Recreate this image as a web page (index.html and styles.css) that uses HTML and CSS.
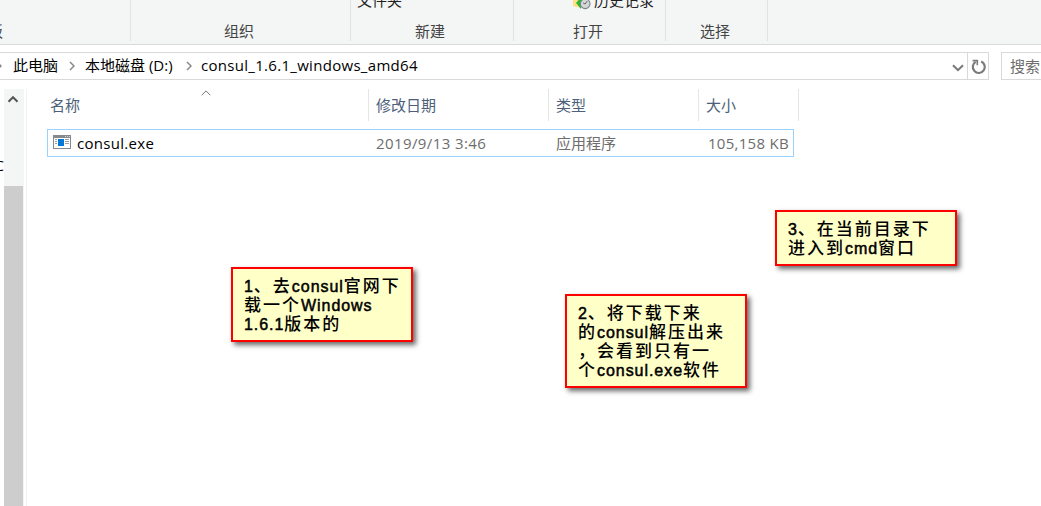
FILE: index.html
```html
<!DOCTYPE html>
<html lang="zh-CN">
<head>
<meta charset="utf-8">
<title>consul_1.6.1_windows_amd64</title>
<link rel="stylesheet" href="styles.css">
</head>
<body>
<div class="explorer">
  <header class="ribbon">
    <section class="group g-clip"><span class="label">板</span></section>
    <section class="group g-org"><span class="label">组织</span></section>
    <section class="group g-new"><span class="command">文件夹</span><span class="label">新建</span></section>
    <section class="group g-open">
      <span class="command">
        <svg class="history-icon" width="18" height="18" viewBox="0 0 18 18">
          <path d="M0 1h8v15l-8-2z" fill="#ffe08a"/>
          <path d="M3 11l6-7v3h3v7H8v3z" fill="#2fb534"/>
          <circle cx="12.200" cy="11.800" r="4.800" fill="#d5d8d8" stroke="#7d8585" stroke-width="1.1"/>
          <path d="M14.300 9l-2.200 3-2-1" fill="none" stroke="#606a6a"/>
        </svg>历史记录</span>
      <span class="label">打开</span>
    </section>
    <section class="group g-select"><span class="label">选择</span></section>
  </header>

  <nav class="address-row">
    <div class="address">
      <svg class="crumb-arrow first" width="6" height="10" viewBox="0 0 6 10"><path d="M1 1l4 4-4 4"/></svg>
      <span class="crumb pc">此电脑</span>
      <svg class="crumb-arrow" width="6" height="10" viewBox="0 0 6 10"><path d="M1 1l4 4-4 4"/></svg>
      <span class="crumb disk">本地磁盘 (D:)</span>
      <svg class="crumb-arrow" width="6" height="10" viewBox="0 0 6 10"><path d="M1 1l4 4-4 4"/></svg>
      <span class="crumb folder">consul_1.6.1_windows_amd64</span>
      <svg class="dropdown" width="12" height="8" viewBox="0 0 12 8"><path d="M1 1.2l5 5 5-5"/></svg>
      <span class="refresh">
        <svg width="16" height="16" viewBox="0 0 16 16"><path d="M10.200 2.500A6 6 0 1 1 4.600 2.900" fill="none" stroke="#7a7a7a" stroke-width="2.200"/><path d="M1.600 1.600h4.700v4.700" fill="none" stroke="#7a7a7a" stroke-width="1.600"/></svg>
      </span>
    </div>
    <div class="search">搜索</div>
  </nav>

  <main class="body">
    <aside class="tree">
      <span class="tree-clip">C</span>
      <div class="scrollbar">
        <svg width="12" height="8" viewBox="0 0 12 8"><path d="M1.500 6.700L6 2.200l4.500 4.500" fill="none" stroke="#555" stroke-width="2"/></svg>
        <div class="thumb"></div>
      </div>
    </aside>
    <section class="files">
      <div class="columns">
        <div class="col c-name">名称
          <svg class="sort" width="10" height="6" viewBox="0 0 10 6"><path d="M.7 5.200L5 .9l4.300 4.300" fill="none" stroke="#777"/></svg>
        </div>
        <div class="col c-date">修改日期</div>
        <div class="col c-type">类型</div>
        <div class="col c-size">大小</div>
      </div>
      <div class="file">
        <svg class="exe" width="18" height="14" viewBox="0 0 18 14" shape-rendering="crispEdges">
          <rect width="18" height="14" fill="#85888c"/>
          <rect x="1" y="3" width="16" height="10" fill="#fff"/>
          <path d="M12 1h1v1h-1zM14 1h1v1h-1zM16 1h1v1h-1z" fill="#d7d9db"/>
          <path d="M2 4h2v1H2zM2 6h2v1H2zM2 8h2v1H2zM12 4h4v1h-4zM12 6h4v1h-4zM12 8h4v1h-4z" fill="#999ca0"/>
          <rect x="5" y="4" width="6" height="7" fill="#0078d7"/>
        </svg>
        <span class="f-name">consul.exe</span>
        <span class="f-date">2019/9/13 3:46</span>
        <span class="f-type">应用程序</span>
        <span class="f-size">105,158 KB</span>
      </div>
    </section>
  </main>

  <div class="note note-1">
    <p><b>1</b>、去<b>consul</b>官网下</p>
    <p>载一个<b>Windows</b></p>
    <p><b>1.6.1</b>版本的</p>
  </div>
  <div class="note note-2">
    <p><b>2</b>、将下载下来</p>
    <p>的<b>consul</b>解压出来</p>
    <p>，会看到只有一</p>
    <p>个<b>consul.exe</b>软件</p>
  </div>
  <div class="note note-3">
    <p><b>3</b>、在当前目录下</p>
    <p>进入到<b>cmd</b>窗口</p>
  </div>
</div>
</body>
</html>
```
FILE: styles.css
```css
* { box-sizing: border-box; }
body { margin: 0; background: #fff; }
.explorer {
  position: relative;
  width: 1041px;
  height: 506px;
  overflow: hidden;
  font: 15px/20px "Open Sans", "Noto Sans CJK SC", sans-serif;
  color: #000;
  white-space: nowrap;
}
svg { display: block; flex: none; }

.ribbon {
  display: flex;
  height: 45px;
  background: #f4f6f6;
  border-bottom: 1px solid #d9dada;
  color: #444;
}
.group {
  display: flex;
  flex-direction: column;
  justify-content: flex-end;
  height: 41px;
  border-right: 1px solid #e1e3e3;
}
.group .command { display: flex; align-items: flex-end; height: 20px; margin-bottom: 11px; color: #222; }
.label { height: 20px; }
.g-clip { width: 131px; }
.g-clip .label { margin-left: -12px; }
.g-org { width: 220px; padding-left: 93px; }
.g-new { width: 163px; padding-left: 6px; }
.g-new .label { padding-left: 58px; }
.g-open { width: 152px; padding-left: 59px; }
.g-select { width: 102px; padding-left: 34px; }
.history-icon { margin: 0 3px 0 0; }

.address-row { display: flex; gap: 12px; padding-top: 7px; height: 44px; }
.address {
  display: flex;
  flex: none;
  align-items: center;
  width: 989px;
  height: 28px;
  border: 1px solid #d9d9d9;
  border-left: 0;
}
.crumb { padding-bottom: 2px; }
.crumb-arrow { margin-top: -1px; }
.crumb-arrow path { fill: none; stroke: #888; stroke-width: 1.5; }
.crumb-arrow.first { margin-left: -4px; }
.crumb.pc { width: 56px; margin-left: 11px; }
.crumb.disk { width: 101px; margin-left: 10px; }
.crumb.folder { margin-left: 9px; letter-spacing: .3px; }
.dropdown { margin-left: auto; margin-right: 3px; margin-top: 4px; }
.dropdown path { fill: none; stroke: #777; stroke-width: 2; }
.refresh { display: flex; align-items: center; padding: 2px 0 0 3px; width: 21px; height: 26px; border-left: 1px solid #d9d9d9; }
.search { flex: none; width: 60px; height: 28px; padding: 3px 8px; border: 1px solid #d9d9d9; color: #6d6d6d; }

.body { display: flex; height: 417px; }
.tree { display: flex; width: 27px; border-right: 1px solid #f1f3f3; }
.tree-clip { width: 4px; overflow: hidden; padding-top: 66px; direction: rtl; }
.scrollbar { display: flex; flex-direction: column; width: 20px; background: #f4f6f6; }
.scrollbar svg { margin: 6px 0 0 3px; }
.thumb { width: 19px; height: 320px; margin-top: 83px; background: #cdcdcd; }
.files { padding-left: 20px; }
.columns { display: flex; height: 32px; margin-bottom: 8px; color: #4c607a; }
.col { display: flex; align-items: center; height: 32px; padding-left: 7px; border-right: 1px solid #e5e5e5; }
.c-name { width: 322px; padding-left: 3px; }
.c-date { width: 180px; }
.c-type { width: 150px; }
.c-size { width: 100px; }
.sort { align-self: flex-start; margin: 1px 0 0 121px; }
.file {
  display: flex;
  align-items: center;
  width: 747px;
  height: 28px;
  padding: 0 4px 0 5px;
  border: 1px solid #99d1ff;
  color: #6d6d6d;
}
.exe { margin-top: -2px; }
.f-name { width: 299px; margin-left: 6px; color: #000; letter-spacing: .3px; }
.f-date { width: 180px; letter-spacing: .4px; }
.f-type { width: 100px; }
.f-size { margin-left: auto; letter-spacing: .3px; }

.note {
  position: absolute;
  width: 182px;
  padding: 6px 0 0 11px;
  border: 2px solid #f00;
  background: #ffffc8;
  box-shadow: 3px 3px 5px rgba(0, 0, 0, .6);
  font: 500 17px/19px "Noto Sans CJK SC", sans-serif;
  letter-spacing: 2px;
}
.note p { height: 19px; margin: 0; }
.note b {
  font: 16px/17px "Liberation Sans", sans-serif;
  letter-spacing: .95px;
  -webkit-text-stroke: .5px #000;
}
.note-1 { left: 231px; top: 267px; height: 75px; }
.note-2 { left: 565px; top: 294px; height: 94px; }
.note-3 { left: 775px; top: 210px; height: 56px; }
```
